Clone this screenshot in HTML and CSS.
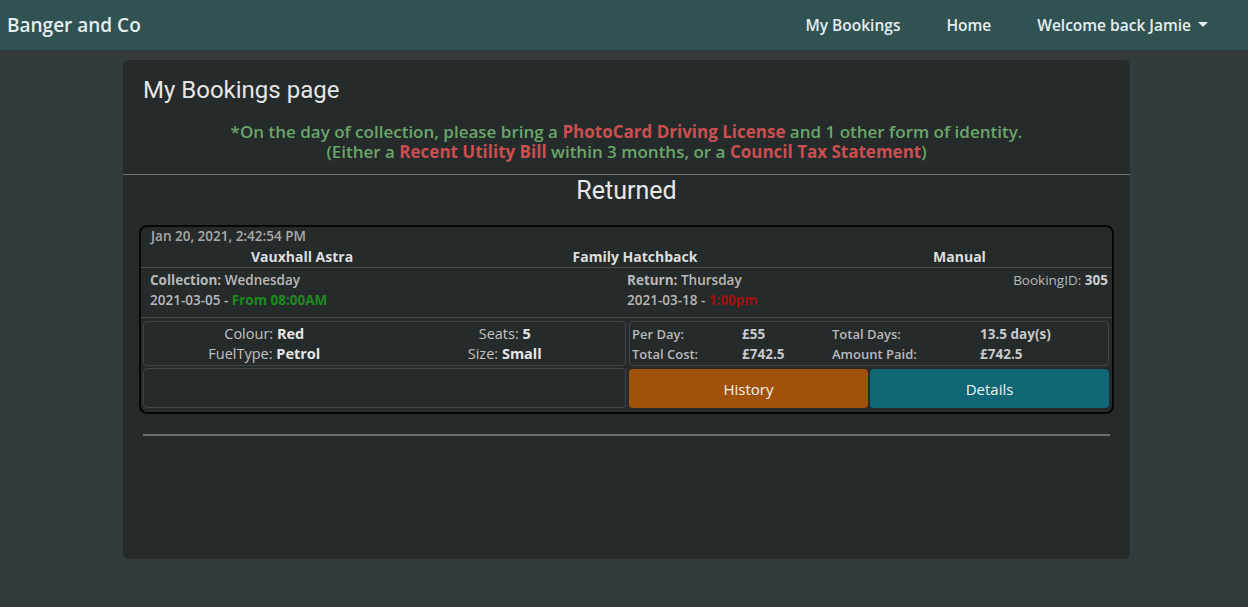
FILE: index.html
```html
<!DOCTYPE html>
<html lang="en">
<head>
<meta charset="utf-8">
<title>My Bookings</title>
<link rel="stylesheet" href="styles.css">
</head>
<body>
<nav class="navbar">
  <a class="brand">Banger and Co</a>
  <ul class="nav-links">
    <li><a>My Bookings</a></li>
    <li><a>Home</a></li>
    <li><a class="dropdown">Welcome back Jamie <span class="caret"></span></a></li>
  </ul>
</nav>
<main class="page">
  <section class="panel">
    <header class="panel-head">
      <h1 class="page-title">My Bookings page</h1>
      <p class="notice"><span class="line">*On the day of collection, please bring a <span class="hl">PhotoCard Driving License</span> and 1 other form of identity.</span><span class="line">(Either a <span class="hl">Recent Utility Bill</span> within 3 months, or a <span class="hl">Council Tax Statement</span>)</span></p>
    </header>
    <div class="panel-body">
      <h2 class="status">Returned</h2>
      <article class="booking">
        <div class="b-date">Jan 20, 2021, 2:42:54 PM</div>
        <div class="b-car">
          <span>Vauxhall Astra</span>
          <span>Family Hatchback</span>
          <span>Manual</span>
        </div>
        <div class="b-times">
          <div class="t-col">
            <div><b>Collection:</b> Wednesday</div>
            <div>2021-03-05 - <b class="green">From 08:00AM</b></div>
          </div>
          <div class="t-col">
            <div><b>Return:</b> Thursday</div>
            <div>2021-03-18 - <b class="red">1:00pm</b></div>
          </div>
          <div class="t-id">BookingID: <b>305</b></div>
        </div>
        <div class="b-grid">
          <div class="cell specs">
            <div>Colour: <b>Red</b></div>
            <div>Seats: <b>5</b></div>
            <div>FuelType: <b>Petrol</b></div>
            <div>Size: <b>Small</b></div>
          </div>
          <div class="cell prices">
            <b class="lbl">Per Day:</b><b>£55</b><b class="lbl">Total Days:</b><b>13.5 day(s)</b>
            <b class="lbl">Total Cost:</b><b>£742.5</b><b class="lbl">Amount Paid:</b><b>£742.5</b>
          </div>
          <div class="cell empty"></div>
          <div class="buttons">
            <button class="btn btn-history">History</button>
            <button class="btn btn-details">Details</button>
          </div>
        </div>
      </article>
      <hr class="divider">
    </div>
  </section>
</main>
</body>
</html>
```

FILE: styles.css
```css
* { box-sizing: border-box; }
html, body { margin: 0; padding: 0; }
body {
  background: #343b3d;
  font-family: "Open Sans", "Noto Sans", sans-serif;
  color: #d4d4d4;
  height: 607px;
  overflow: hidden;
}
a { color: inherit; text-decoration: none; }

.navbar {
  height: 50px;
  background: #315252;
  display: flex;
  align-items: center;
  justify-content: space-between;
  padding: 0 40px 0 7px;
}
.brand {
  font-size: 19px;
  font-weight: 600;
  color: #e4eef0;
}
.nav-links {
  list-style: none;
  margin: 0;
  padding: 0;
  display: flex;
  gap: 46px;
}
.nav-links a {
  font-size: 15.5px;
  font-weight: 600;
  color: #e4eef0;
}
.dropdown { display: flex; align-items: center; gap: 7px; }
.caret {
  display: inline-block;
  width: 0; height: 0;
  border-left: 5px solid transparent;
  border-right: 5px solid transparent;
  border-top: 5px solid #e4eef0;
  margin-top: -2px;
}

.page {
  margin: 10px 0 0 123px;
  width: 1007px;
}
.panel {
  background: #252a2b;
  border-radius: 6px;
  height: 499px;
  overflow: hidden;
}
.panel-head {
  padding: 15px 20px 12px;
  border-bottom: 1px solid #6e7373;
}
.page-title {
  margin: 0;
  font-family: Roboto, "Open Sans", sans-serif;
  font-weight: 400;
  font-size: 24px;
  line-height: 30px;
  color: #e6e6e6;
}
.notice {
  margin: 17px 0 0;
  text-align: center;
  font-size: 17px;
  font-weight: 600;
  line-height: 20px;
  color: #6aa66a;
  display: flex;
  flex-direction: column;
  align-items: center;
}
.notice .line { display: block; height: 20px; }
.hl { color: #cc4f4f; font-weight: 700; }

.panel-body { padding: 0 16px; }
.status {
  margin: 0;
  text-align: center;
  font-family: Roboto, "Open Sans", sans-serif;
  font-weight: 400;
  font-size: 25px;
  line-height: 32px;
  color: #e8e8e8;
  padding-bottom: 18px;
}
.booking {
  border: 2px solid #050606;
  border-radius: 8px;
  font-size: 13.5px;
  color: #b9b9b9;
}
.booking b { font-weight: 700; }
.b-date {
  padding: 1px 10px 0;
  line-height: 16px;
  font-weight: 600;
  color: #aaaaaa;
}
.b-car {
  display: grid;
  grid-template-columns: 322px 344px 1fr;
  text-align: center;
  font-weight: 700;
  font-size: 14px;
  line-height: 21px;
  color: #dedede;
  padding: 2px 0 0;
  border-bottom: 1px solid #464c4d;
}
.b-times {
  display: grid;
  grid-template-columns: 477px 1fr auto;
  padding: 2px 4px 7px 9px;
  line-height: 20px;
  font-weight: 600;
  border-bottom: 1px solid #464c4d;
}
.b-times b { color: #b9b9b9; }
.b-times .green { color: #1c8a1c; }
.b-times .red { color: #a50d0d; }
.t-id { text-align: right; font-weight: 400; }
.t-id b { color: #cfcfcf; }

.b-grid {
  display: grid;
  grid-template-columns: 483px 1fr;
  grid-template-rows: 45px 40px;
  column-gap: 3px;
  row-gap: 2px;
  padding: 3px 3px 4px 2px;
}
.cell {
  border: 1px solid #3f4546;
  border-radius: 4px;
}
.specs {
  display: grid;
  grid-template-columns: 1fr 1fr;
  text-align: center;
  align-content: center;
  font-size: 14.5px;
  line-height: 20px;
  color: #c2c2c2;
}
.specs b { color: #e6e6e6; }
.prices {
  display: grid;
  grid-template-columns: 110px 90px 148px 1fr;
  align-content: center;
  padding-left: 2px;
  font-size: 13.5px;
  line-height: 20px;
  color: #c9c9c9;
}
.prices .lbl { color: #b9b9b9; font-size: 13px; font-weight: 600; }
.buttons {
  display: grid;
  grid-template-columns: 1fr 1fr;
  gap: 2px;
  padding-top: 1px;
}
.btn {
  border: none;
  border-radius: 4px;
  font-family: "Open Sans", "Noto Sans", sans-serif;
  font-size: 15px;
  color: #f1f1f1;
  cursor: pointer;
}
.btn-history { background: #a1510a; }
.btn-details { background: #0f6675; }

.divider {
  margin: 20px 4px 0;
  border: none;
  height: 2px;
  background: #6b6e6e;
}
```
